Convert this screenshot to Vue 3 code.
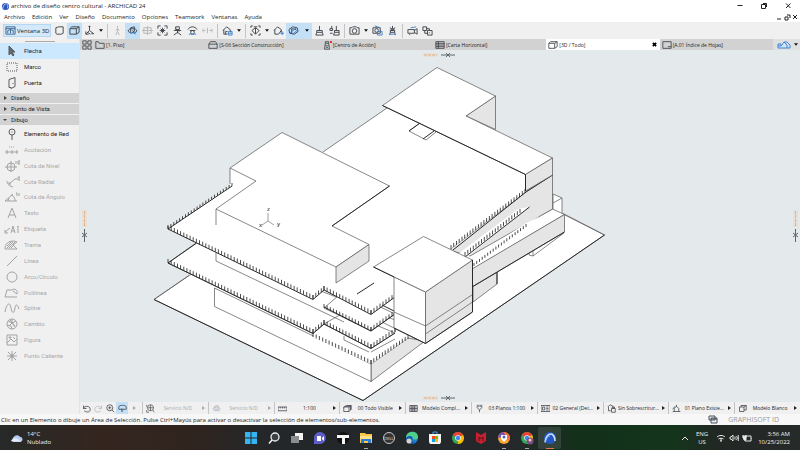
<script setup>
import { h } from 'vue'

const menus = ['Archivo', 'Edición', 'Ver', 'Diseño', 'Documento', 'Opciones', 'Teamwork', 'Ventanas', 'Ayuda']

// Line icons on a 12 x 12 grid: main strokes first, accent strokes second.
const glyphs = {
  window: ['M1 2h10v8H1zM1 4h10M3 9V6l3-1 3 1v3M6 5v4', ''],
  plane: ['M2 3l3-1h5v7l-2 1H3L2 9z', ''],
  box: ['M1 4h7v6H1zM1 4l2-2h8v6l-3 2M8 4l3-2', ''],
  axes: ['M6 1v5l-4 4M6 6l4 3M2 7v3h3M5 2l1-1 1 1M8 9.500h3M4 8l3 2', ''],
  walk: ['M6 1v2M6 4L4 6M6 4l2 2M6 4v3l-2 4M6 7l2 4', ''],
  orbit: ['M3 8C0 7 1 4 6 4s6 3 3 4M4 3l4-1v5l-3 2M4 3v6M6 6l3 4', 'M2 8c2 1 5 1 8 0'],
  target: ['M2 3h8v6H2zM6 1v10M0 6h12', ''],
  fit: ['M1 4V1h3M8 1h3v3M11 8v3H8M4 11H1V8M4 4l4 4M8 4L4 8M3 6h6M6 3v6', ''],
  person: ['M4 2h4v3H4zM2 6h8M6 5v4M6 8l-4 3M6 8l4 3M4 4l4 3', ''],
  look: ['M1 5c2-4 8-4 10 0M3 6h6M4 8a2 2 0 1 0 4 0a2 2 0 1 0-4 0', 'M2 10h8'],
  spread: ['M1 6h3M8 6h3M2 4L0 6l2 2M10 4l2 2-2 2M6 3v6', ''],
  house: ['M1 6l4-4 4 3v3M2 5v5h4M4 10V7h2', 'M7 7h4v4H7zM7 9h4'],
  marquee: ['M1 3V1h2M9 1h2v2M11 9v2H9M3 11H1V9M2 6l4-3 4 3-4 4zM6 3v7M4 2h4', ''],
  cut: ['M1 6l4-4 4 3v3M2 5v5h4l3-4', 'M8 9h4M10 7v4'],
  section: ['M1 5l4-3 5 1 1 4-4 3-5-1zM4 4v5M4 4l5 1', 'M2 9L9 3M5 10l6-5'],
  brush: ['M6 1v5M3 6h6v2H3zM2 11l1-3M10 11H2M10 11L9 8', ''],
  brushes: ['M8 1v5M6 6h5v2H6zM5 11l1-3M11 11H5M11 11V8M3 1v3M1 4h3v2H1zM1 9h3', ''],
  camera: ['M1 3h2l1-1h4l1 1h2v7H1zM3.500 6.500a2.500 2.500 0 1 0 5 0a2.500 2.500 0 1 0-5 0', ''],
  render: ['M1 3h8v6H1zM3 6a2 2 0 1 0 4 0a2 2 0 1 0-4 0', 'M6 7h5v4H6zM3 1l6 2'],
  sun: ['M3 11l1-5h4l1 5M4 8h4M3 3l6 3M9 3L3 6M6 1v3', 'M3 10h6'],
  video: ['M1 5h7v4H1zM8 6l3-2v6L8 8M3 10v1', 'M4 3l6-1'],
  chain: ['M1 2h4v4H1zM6 6h5v5H6zM5 4h3v2M3 6v3h3M8 8v1', ''],
  grid: ['M1 1h4v4H1zM7 1h4v4H7zM1 7h4v4H1zM7 7h4v4H7z', ''],
  folder: ['M1 10V2h3l1 2h6v6z', ''],
  elevation: ['M1 10V5l2-3h6l2 3v5zM1 5h10', ''],
  tower: ['M3 11L4 4h4l1 7zM4 4V2h4v2M4 7h4M5 9h2', ''],
  card: ['M1 2h10v8H1zM1 4h10M1 6h10M1 8h10M4 2v8', ''],
  sheet: ['M1 2h10v8H1zM7 8h4', ''],
  undo: ['M2 2v4h4M2 6c1-4 9-4 9 1S5 11 3 9', ''],
  redo: ['M10 2v4H6M10 6C9 2 1 2 1 7s6 4 8 2', ''],
  zoomin: ['M1 5a4 4 0 1 0 8 0a4 4 0 1 0-8 0M8 8l3 3M3 5h4M5 3v4', ''],
  zoomfit: ['M2 5a4 4 0 1 0 8 0a4 4 0 1 0-8 0M9 8l2 3M6 1v8M2 5h8M1 1v3M1 8v3h3', ''],
  turn: ['M1 4c0-3 10-3 10 0v3H1zM5 6v4M5 10l2-1', ''],
  ruler: ['M0 4h12v5H0zM3 4v2M6 4v2M9 4v2', ''],
  layers: ['M1 4l4-2h6v5l-3 3H1zM1 4h7v6M3 3h7v5M8 4l3-2', ''],
  model: ['M1 2h10v8H1zM1 6h10M4 2v8M7 2v8M2 4h8M2 8h8', ''],
  pen: ['M3 1v4l3 3 3-3V1M6 8v3M5 1v3M7 1v3', ''],
  table: ['M0 2h12v8H0zM2 4h3v4H2zM7 4h3M7 6h3M7 8h3', ''],
  lock: ['M1 4l3-3 4 2v3M2 4v5h3M6 6h5v5H6zM7 6V4h3v2', ''],
  plan: ['M1 10h10M3 10V6l3-3 3 3v4M6 3V1M1 7l3-4', ''],
  cube: ['M2 4h6v6H2zM4 4V2h7v6H8M8 4l3-2', '']
}

const Glyph = (props) =>
  h('svg', { viewBox: '0 0 12 12', fill: 'none', 'stroke-width': 1, 'aria-hidden': 'true' }, [
    h('path', { d: glyphs[props.name][0], stroke: 'currentColor' }),
    h('path', { d: glyphs[props.name][1], stroke: '#3f7fd0' })
  ])
Glyph.props = ['name']

const toolbar = [
  { icon: 'plane', label: 'Planta' },
  { icon: 'box', label: 'Perspectiva 3D', on: true },
  { icon: 'axes', label: 'Ejes' },
  { caret: true },
  { sep: true },
  { icon: 'walk', label: 'Explorar', off: true },
  { icon: 'orbit', label: 'Órbita', on: true },
  { icon: 'target', label: 'Mirar a', off: true },
  { icon: 'fit', label: 'Ajustar' },
  { icon: 'person', label: 'Observador' },
  { icon: 'look', label: 'Vista' },
  { icon: 'spread', label: 'Ampliar', off: true },
  { sep: true },
  { icon: 'house', label: 'Filtro 3D' },
  { caret: true },
  { sep: true },
  { icon: 'marquee', label: 'Área de selección' },
  { caret: true },
  { icon: 'cut', label: 'Plano de corte' },
  { icon: 'section', label: 'Sección 3D', on: true },
  { caret: true, on: true },
  { icon: 'brush', label: 'Pincel' },
  { icon: 'brushes', label: 'Pinceles' },
  { sep: true },
  { icon: 'camera', label: 'Foto' },
  { caret: true },
  { icon: 'render', label: 'Render' },
  { icon: 'sun', label: 'Sol' },
  { sep: true },
  { icon: 'video', label: 'Recorrido' },
  { icon: 'chain', label: 'Enlace' }
]

const tabs = [
  { icon: 'folder', name: '[1. Piso]' },
  { icon: 'elevation', name: '[S-06 Sección Construcción]' },
  { icon: 'tower', name: '[Centro de Acción]', alert: true },
  { icon: 'card', name: '[Carta Horizontal]' },
  { icon: 'box', name: '[3D / Todo]', active: true },
  { icon: 'sheet', name: '[A.01 Índice de Hojas]' }
]

// Toolbox icons on a 16 x 12 grid.
const basicTools = [
  { name: 'Flecha', d: 'M5 1v9l2-2 2 3 1-1-2-3h3z', fill: true, on: true },
  { name: 'Marco', d: 'M3 2h10v8H3z', dash: true },
  { name: 'Puerta', d: 'M5 10.500V2.500l6-2v9l-4 2v-1zM9 6v1' }
]
const drawTools = [
  { name: 'Elemento de Red', d: 'M5 4a3 3 0 1 0 6 0a3 3 0 1 0-6 0M7.500 4h1M8 7v5', live: true },
  { name: 'Acotación', d: 'M1 8h13M3 6v4M8 6v4M13 6v4M5 3h1M7 3h1M9 3h1' },
  { name: 'Cota de Nivel', d: 'M3 7a4 4 0 1 0 8 0a4 4 0 1 0-8 0M7 1v12M1 7h12M12 1v3M14 1h2v3h-2z' },
  { name: 'Cota Radial', d: 'M3 5c0 4 3 5 6 6M5 8l6-5M5 8V6M5 8h2M12 2v2M14 1h2v3h-2z' },
  { name: 'Cota de Ángulo', d: 'M1 10h12M1 10l8-7M7 4c3 1 4 3 4 6M4 10l1-3M12 2h1v3M15 2v3' },
  { name: 'Texto', d: 'M4 11L8 1l4 10M5 8h6' },
  { name: 'Etiqueta', d: 'M1 9l5-4M1 7v3h3M7 10l2-7 2 7M8 8h2M13 4l1-1v7' },
  { name: 'Trama', d: 'M1 10c0-5 3-8 9-8l3 1-4 3 4 4zM3 9l6-6M5 9l6-6M3 7l5-5M7 9l2-2' },
  { name: 'Línea', d: 'M3 11L13 1' },
  { name: 'Arco/Círculo', d: 'M3 6a5 5 0 1 0 10 0a5 5 0 1 0-10 0' },
  { name: 'Polilínea', d: 'M13 10H1L3 3h5c3-2 6 0 5 4L9 4' },
  { name: 'Spline', d: 'M1 10C3 0 6 0 7 6s3 6 4 0 3-2 4 1' },
  { name: 'Cambio', d: 'M3 6a5 5 0 1 0 10 0a5 5 0 1 0-10 0M4 3l4 2 4-2M5 8l3-3 3 4M8 1v4M3 7l4 1 1 3M6 2l5 6' },
  { name: 'Figura', d: 'M3 1h10v10H3zM3 9l4-4 3 3 3-3M5 3h2v1H5zM9 3l2 2' },
  { name: 'Punto Caliente', d: 'M8 1v10M3 6h10M4 2l8 8M12 2l-8 8M7 5h2v2H7z' }
]

const quick = [
  { icon: 'zoomfit', text: 'Servicio N/D', off: true },
  { icon: 'orbit', text: 'Servicio N/D', off: true, dim: true },
  { icon: 'ruler', text: '1:100' },
  { icon: 'layers', text: '00 Todo Visible' },
  { icon: 'model', text: 'Modelo Compl...' },
  { icon: 'pen', text: '03 Planos 1:100' },
  { icon: 'table', text: '02 General (Det...' },
  { icon: 'lock', text: 'Sin Sobrescritur...' },
  { icon: 'plan', text: '01 Plano Existe...' },
  { icon: 'cube', text: 'Modelo Blanco' }
]

// Evenly spaced railing posts between two points.
function posts(x1, y1, x2, y2, height = 4) {
  const count = Math.round(Math.hypot(x2 - x1, y2 - y1) / 3.5)
  let d = ''
  for (let i = 0; i <= count; i++) {
    const x = x1 + ((x2 - x1) * i) / count
    const y = y1 + ((y2 - y1) * i) / count
    d += `M${x.toFixed(1)} ${y.toFixed(1)}v-${height}`
  }
  return d
}

const railings = [
  posts(168, 229, 232, 186, 3),
  posts(168, 229, 313, 299),
  posts(313, 299, 324, 290),
  posts(324, 290, 371, 314),
  posts(371, 314, 395, 297),
  posts(168, 263, 313, 333),
  posts(313, 333, 324, 324),
  posts(324, 324, 371, 348),
  posts(371, 348, 395, 332),
  posts(324, 308, 371, 331),
  posts(371, 331, 395, 314),
  posts(313, 337, 371, 364),
  posts(371, 364, 408, 339),
  posts(451, 249, 525, 193),
  posts(465, 256, 520, 213),
  posts(474, 266, 526, 227, 3)
].join('')
</script>

<template>
  <div class="desktop">
    <header class="titlebar">
      <svg class="logo" viewBox="0 0 10 10" aria-hidden="true">
        <circle cx="5" cy="5" r="4" fill="#2b55b8" />
        <path d="M2 8c0-4 2-6 4-6M6 2c2 1 2 3 1 5" fill="none" stroke="#b9d4ff" />
      </svg>
      <h1>archivo de diseño centro cultural - ARCHICAD 24</h1>
      <div class="controls">
        <button aria-label="Minimizar"><svg viewBox="0 0 8 8"><path d="M1.500 3.500h5" /></svg></button>
        <button aria-label="Restaurar"><svg viewBox="0 0 8 8"><path d="M1.500 2.500h4v4h-4zM3 1.500h3.500V5" /></svg></button>
        <button aria-label="Cerrar"><svg viewBox="0 0 8 8"><path d="M2 1.500l4.500 4.500M6.500 1.500L2 6" /></svg></button>
      </div>
    </header>

    <nav class="menubar">
      <button v-for="m in menus" :key="m">{{ m }}</button>
      <div class="doc-controls">
        <button aria-label="Minimizar documento"><svg viewBox="0 0 8 8"><path d="M2 6h4" /></svg></button>
        <button aria-label="Restaurar documento"><svg viewBox="0 0 8 8"><path d="M2 4h3v3H2zM4 2h3v3" /></svg></button>
        <button aria-label="Cerrar documento"><svg viewBox="0 0 8 8"><path d="M2 2l4 4M6 2L2 6" /></svg></button>
      </div>
    </nav>

    <div class="toolbar">
      <button class="mode"><Glyph name="window" class="glyph blue" />Ventana 3D</button>
      <template v-for="(t, i) in toolbar" :key="i">
        <span v-if="t.sep" class="sep"></span>
        <button v-else-if="t.caret" class="caret" :class="{ on: t.on }" aria-label="Más opciones">
          <svg viewBox="0 0 6 4"><path d="M0 0h6L3 4z" /></svg>
        </button>
        <button v-else class="tool" :class="{ on: t.on, off: t.off }" :aria-label="t.label">
          <Glyph :name="t.icon" class="glyph" />
        </button>
      </template>
    </div>

    <div class="workspace">
      <aside class="toolbox">
        <div class="grip"></div>
        <div class="basic">
          <button v-for="t in basicTools" :key="t.name" class="row" :class="{ on: t.on }">
            <svg viewBox="0 0 16 12" aria-hidden="true">
              <path :d="t.d" :fill="t.fill ? '#5b6b78' : 'none'" :stroke-dasharray="t.dash ? '1 1' : null" />
            </svg>{{ t.name }}
          </button>
        </div>
        <button class="group"><svg viewBox="0 0 6 6"><path d="M2 1l3 2-3 2z" /></svg>Diseño</button>
        <button class="group"><svg viewBox="0 0 6 6"><path d="M2 1l3 2-3 2z" /></svg>Punto de Vista</button>
        <button class="group"><svg viewBox="0 0 6 6"><path d="M1 2h4L3 4z" /></svg>Dibujo</button>
        <div class="list">
          <button v-for="t in drawTools" :key="t.name" class="row" :class="{ off: !t.live }">
            <svg viewBox="0 0 16 12" aria-hidden="true"><path :d="t.d" fill="none" /></svg>{{ t.name }}
          </button>
        </div>
      </aside>

      <main class="stage">
        <div class="tabs">
          <button class="overview" aria-label="Vista general"><Glyph name="grid" class="glyph" /></button>
          <div v-for="t in tabs" :key="t.name" class="tab" :class="{ active: t.active }">
            <button class="tab-name">
              <Glyph :name="t.icon" class="glyph" /><span v-if="t.alert" class="alert"></span>{{ t.name }}
            </button>
            <button v-if="t.active" class="tab-close" aria-label="Cerrar pestaña">
              <svg viewBox="0 0 6 6"><path d="M1 1l4 4M5 1L1 5" /></svg>
            </button>
          </div>
          <button class="navigator" aria-label="Navegador">
            <svg class="skyline" viewBox="0 0 14 9"><path d="M1 8V4h3v2l3-4 3 3v3zM7 2h3l3 3v3h-3M1 6h3" /></svg>
            <svg class="down" viewBox="0 0 6 4"><path d="M0 0h6L3 4z" /></svg>
          </button>
        </div>

        <svg class="model" viewBox="80 50 720 352" role="img" aria-label="Modelo 3D">
          <g class="solid">
            <path class="white" d="M154 299.500L189 275.500L330 200L564 214L604.500 235L363 400.500z" stroke="none" />
            <path d="M189 275.500L154 299.500M564 214.500L604.500 235" />
            <path class="bold" d="M154 299.500L363 400.500L604.500 235" />

            <path class="white" d="M553 194l9 4v17l-9-4zM553 203l9-5" />
            <path class="gray" d="M473 286l24-14v12l-24 18z" />
            <path class="bold" d="M497 272v12" />
            <path d="M533 256l31-23M529 251v4l4 1v-6" />
            <path class="white" d="M456 262L552.500 209L564.500 214.500L473 269z" />
            <path class="gray" d="M472 269L564.500 214.500V232L472 287z" />
            <path class="bold" d="M564.500 232L472 287" />
            <path class="gray" d="M527 191L552.500 175V209L470 256L449 250z" />
            <path class="white plain" d="M458 254L518 209L529 207L467 257z" />
            <path class="white plain" d="M472 259L526 223L540 216L474 267z" />

            <path class="gray" d="M371 364L408 338L425 341L371 381.500z" />
            <path class="white" d="M214.500 288L371 364V381.500L214.500 306.500z" />
            <path class="white" d="M168 263L196 243L216 250L395 320V333L371 348.500L324 324L313 333.500z" />
            <path class="white plain" d="M313 337L324 324L371 348L395 332L408 338L371 364z" />
            <path class="white" d="M324 324L345 312L395 333L371 348.500z" />
            <path d="M344 336v4l25 12M371 352l24-13" />
            <path class="white" d="M324 308L345 290L395 314L371 331z" />
            <path d="M216 253v8L344 322" />
            <path class="bold" d="M168 263L196 243.500M168 263L313 333.500L324 324L371 348.500L395 333M324 307L371 331L395 314" />

            <path class="white plain" d="M168 229L230 186V168L323 152L387 108L527 175V191L449 250L395 297L371 314.500L324 290L313 299.500z" />
            <path class="bold" d="M232 186L168 229L313 299.500L324 290L371 314.500L395 297" />
            <path d="M323 152L387 108" />
            <path class="bold" d="M453 250L526 192L552.500 175M465 257L529.500 207" />
            <path d="M382 322l12 6" />
            <path class="bold" d="M357 294l17-11M382 305l12 6" />

            <path class="white" d="M282 132.500L389.500 186L332 226L369 244.500L336 267L216 209L256 181L230 168z" />
            <path class="bold" d="M389.500 186L332 226" />
            <path d="M230 168v16M216 209v16" />
            <path class="gray" d="M336 267L369 244.500V261L336 283z" />

            <path class="gray" d="M495.500 96V129.500L466 116z" />
            <path class="white" d="M437 67.500L495.500 96L466 116L552.500 158L525.500 174.500L382.500 105.500z" />
            <path class="gray" d="M525.500 174.500L552.500 158V175L525.500 191z" />
            <path class="bold" d="M382.500 105.500L525.500 174.500V191" />
            <path d="M420 123L409 131L426 140L436 132" />
            <path class="bold" d="M420 123L409 131M423 139L434 131" />

            <path class="posts" :d="railings" />

            <path class="white" d="M394 277V328L425.500 343.500V292z" />
            <path class="gray" d="M425.500 292L472.500 260V312L425.500 343.500z" />
            <path class="white" d="M423.500 236.500L472.500 260L425.500 292L373.500 267z" />
            <path d="M394 312L425.500 326L472.500 294.500M425.500 334L472.500 302" />
            <path class="bold" d="M373.500 267L394 277M394 328L425.500 343.500L472.500 312V260" />
          </g>

          <g class="axis">
            <path d="M268 213v8l-6 4M268 221l6 4" />
            <text x="267" y="211">z</text>
            <text x="259" y="227">x</text>
            <text x="277" y="226">y</text>
          </g>

          <g class="markers">
            <rect x="423" y="53" width="15" height="4" />
            <rect x="423" y="396" width="15" height="4" />
            <rect x="82" y="210" width="5" height="17" />
            <rect x="793" y="210" width="5" height="17" />
            <path class="dash" d="M424 55h13M424 398h13M84.500 211v15M795.500 211v15" />
            <path class="knot" d="M441 55h14M446 53l4 4M450 53l-4 4M441 398h14M446 396l4 4M450 396l-4 4M84.500 229v13M82 233l5 4M87 233l-5 4M795.500 229v13M793 233l5 4M798 233l-5 4" />
          </g>
        </svg>

        <div class="quickbar">
          <div class="views">
            <button aria-label="Deshacer vista"><Glyph name="undo" class="glyph" /></button>
            <button class="off" aria-label="Rehacer vista"><Glyph name="redo" class="glyph" /></button>
            <button aria-label="Acercar"><Glyph name="zoomin" class="glyph" /></button>
            <button class="on" aria-label="Girar"><Glyph name="turn" class="glyph" /></button>
            <button class="off" aria-label="Siguiente"><svg class="arrow" viewBox="0 0 4 6"><path d="M1 1l3 2-3 2z" /></svg></button>
          </div>
          <button v-for="(q, i) in quick" :key="i" class="option" :class="{ off: q.off }">
            <Glyph :name="q.icon" class="glyph" :class="{ faint: q.dim }" />
            <span>{{ q.text }}</span>
            <svg class="arrow" viewBox="0 0 4 6"><path d="M1 1l3 2-3 2z" /></svg>
          </button>
        </div>
      </main>
    </div>

    <footer class="status">
      <p>Clic en un Elemento o dibuje un Área de Selección. Pulse Ctrl+Mayús para activar o desactivar la selección de elementos/sub-elementos.</p>
      <svg class="windows" viewBox="0 0 10 9" aria-hidden="true"><path d="M1 1h6v4H1zM3 3h6v5H3zM3 4h6" /></svg>
      <span class="brand">GRAPHISOFT ID</span>
    </footer>

    <div class="taskbar">
      <button class="weather">
        <svg viewBox="0 0 14 10" aria-hidden="true">
          <path d="M4 9a3 3 0 0 1 0-5a4 4 0 0 1 7 0a2.500 2.500 0 0 1 0 5z" fill="#b8cdf2" />
          <path d="M1 8c2-3 5-4 9-1l2 2H3z" fill="#e3ebfa" />
        </svg>
        <span>14°C<br />Nublado</span>
      </button>

      <div class="apps">
        <button aria-label="Inicio">
          <svg viewBox="0 0 14 14"><path d="M1 1h5.500v5.500H1zM7.500 1H13v5.500H7.500zM1 7.500h5.500V13H1zM7.500 7.500H13V13H7.500z" fill="#35b5f1" /></svg>
        </button>
        <button aria-label="Buscar">
          <svg viewBox="0 0 14 14"><circle cx="8" cy="6" r="4" fill="#3a3f42" stroke="#eee" stroke-width="1.300" /><path d="M5 9l-3 3.500" stroke="#eee" stroke-width="1.600" /></svg>
        </button>
        <button aria-label="Vista de tareas">
          <svg viewBox="0 0 14 14"><path d="M5 2h8v7H5z" fill="#f4f4f4" /><path d="M1 5h8v7H1z" fill="#8c8c8c" /></svg>
        </button>
        <button aria-label="Chat">
          <svg viewBox="0 0 14 14"><path d="M1 13V6a6 6 0 1 1 6 7z" fill="#5b5fc7" /><path d="M4 5h4v5H4zM9 7l2-2v5L9 8z" fill="#fff" /></svg>
        </button>
        <button aria-label="Cuaderno">
          <svg viewBox="0 0 14 14"><circle cx="7" cy="7" r="6" fill="#111" /><path d="M1 4h12v3H9v6H6V7H1z" fill="#f5f5f5" /></svg>
        </button>
        <button class="open" aria-label="Explorador">
          <svg viewBox="0 0 14 14"><path d="M1 2h5l1 1h6v9H1z" fill="#f7c948" /><path d="M1 5h12v4H1z" fill="#ffe08a" /><path d="M2 8h10v4H9v-2H5v2H2z" fill="#2d7dd2" /></svg>
        </button>
        <button aria-label="Dell">
          <svg viewBox="0 0 14 14"><circle cx="7" cy="7" r="5.500" fill="#333" stroke="#c9c9c9" /><text x="7" y="9" text-anchor="middle" font-size="4" fill="#e6e6e6">DELL</text></svg>
        </button>
        <button aria-label="Edge">
          <svg viewBox="0 0 14 14"><circle cx="7" cy="7" r="6" fill="#1f7fd0" /><path d="M1 7c0-8 12-8 12-1 0 3-4 3-5 2 1-3-4-4-7-1z" fill="#4fd08a" /><path d="M1 7c3-3 6-2 6 0-1 3 2 5 4 4-5 4-10 1-10-4z" fill="#145ea8" /><circle cx="4" cy="10" r="2.500" fill="#d7d2cb" /></svg>
        </button>
        <button aria-label="Tienda">
          <svg viewBox="0 0 14 14"><path d="M5 4V1h4v3" fill="none" stroke="#3aa0e8" /><path d="M1 3h12v8l-1 2H2l-1-2z" fill="#f2f2f2" /><path d="M4 5h3v3H4z" fill="#f25022" /><path d="M7 5h3v3H7z" fill="#7fba00" /><path d="M4 8h3v3H4z" fill="#00a4ef" /><path d="M7 8h3v3H7z" fill="#ffb900" /></svg>
        </button>
        <button aria-label="Chrome">
          <svg viewBox="0 0 14 14"><circle cx="7" cy="7" r="6" fill="#34a853" /><path d="M7 7L1.800 4a6 6 0 0 1 10.400 0z" fill="#ea4335" /><path d="M7 7l5.200-3A6 6 0 0 1 7 13z" fill="#fbbc05" /><circle cx="7" cy="7" r="2.800" fill="#fff" /><circle cx="7" cy="7" r="2.200" fill="#4285f4" /></svg>
        </button>
        <button aria-label="McAfee">
          <svg viewBox="0 0 14 14"><path d="M2 1l5 3 5-3v9l-5 3-5-3z" fill="#c8202f" /><path d="M5 10V6l2 1.500L9 6v4" fill="none" stroke="#4a1418" /></svg>
        </button>
        <button class="open" aria-label="Navegador seguro">
          <svg viewBox="0 0 14 14"><circle cx="7" cy="7" r="6" fill="#f3a52d" /><path d="M1 7a6 6 0 0 1 6-6l2 4z" fill="#7a4fc0" /><path d="M7 1a6 6 0 0 1 5 9L9 7z" fill="#f26b3a" /><path d="M4 4h6v4l-3 3-3-3z" fill="#fff" /><circle cx="7" cy="6" r="1.500" fill="#4b62c8" /></svg>
        </button>
        <button class="open" aria-label="Chrome, perfil">
          <svg viewBox="0 0 14 14"><circle cx="7" cy="7" r="6" fill="#34a853" /><path d="M7 7L1.800 4a6 6 0 0 1 10.400 0z" fill="#ea4335" /><path d="M7 7l5.200-3A6 6 0 0 1 7 13z" fill="#fbbc05" /><circle cx="7" cy="7" r="2.800" fill="#fff" /><circle cx="7" cy="7" r="2.200" fill="#4285f4" /><circle cx="10" cy="10" r="3.500" fill="#7b4f86" /><circle cx="10" cy="9" r="1.500" fill="#f0c9a8" /></svg>
        </button>
        <button class="current" aria-label="Archicad">
          <svg viewBox="0 0 14 14"><circle cx="7" cy="7" r="6" fill="#2459c4" /><path d="M2 11C3 5 6 3 8 3c2 0 4 3 4 7" fill="none" stroke="#cfe4ff" stroke-width="1.600" /><path d="M2 12c1-4 3-7 5-7" fill="none" stroke="#7fb2f5" /></svg>
        </button>
      </div>

      <div class="tray">
        <button aria-label="Iconos ocultos"><svg viewBox="0 0 10 10"><path d="M2 7l3-3 3 3" /></svg></button>
        <button class="lang">ENG<br />US</button>
        <div class="signals">
          <svg viewBox="0 0 10 10" aria-hidden="true"><path d="M1 4c2-2 6-2 8 0M2.500 6c2-1 3-1 5 0M4 8h2M5 5v3" /></svg>
          <svg viewBox="0 0 10 10" aria-hidden="true"><path d="M1 4h1l2-2v6L2 6H1zM6 3.500v3M7.500 3c1 1 1 3 0 4M9 2c1 2 1 4 0 6" /></svg>
          <svg viewBox="0 0 10 10" aria-hidden="true"><path d="M3 3h6v5H3zM10 5v1M1 2v3h3V2" /><path d="M1 3h3v4H2z" fill="#e8e8e8" /></svg>
        </div>
        <button class="clock">3:56 AM<br />10/25/2022</button>
      </div>
    </div>
  </div>
</template>

<style>
body {
  margin: 0;
}
</style>

<style scoped>
.desktop {
  display: flex;
  flex-direction: column;
  min-height: 100vh;
  background: #f0f0f0;
  color: #1c1c1c;
  font-family: "Open Sans", "Noto Sans", sans-serif;
  font-size: 6px;
  line-height: 8px;
}
button {
  display: flex;
  align-items: center;
  margin: 0;
  padding: 0;
  border: 0;
  background: none;
  color: inherit;
  font: inherit;
  text-align: left;
  white-space: nowrap;
}
svg {
  display: block;
  flex: none;
}
.glyph {
  width: 10px;
  height: 10px;
  color: #3c4248;
}
.toolbar .glyph {
  width: 11px;
  height: 11px;
}
.toolbar .blue {
  color: #35628f;
}
.titlebar {
  display: flex;
  align-items: center;
  height: 12px;
  padding-left: 1px;
  background: #fff;
}
.logo {
  width: 9px;
  height: 9px;
}
.titlebar h1 {
  flex: 1;
  margin: 0 0 0 1px;
  font-size: 6px;
  font-weight: 400;
}
.controls {
  display: flex;
}
.controls button {
  justify-content: center;
  width: 24px;
}
.controls svg,
.doc-controls svg {
  width: 8px;
  height: 8px;
  fill: none;
  stroke: #222;
}
.menubar {
  display: flex;
  align-items: center;
  gap: 7px;
  height: 10px;
  padding: 0 1px 0 4px;
  background: #fff;
}
.doc-controls {
  display: flex;
  margin-left: auto;
}
.toolbar {
  display: flex;
  align-items: center;
  height: 17px;
  padding-left: 3px;
}
.mode {
  gap: 1px;
  width: 48px;
  height: 13px;
  margin-right: 1px;
  padding-left: 1px;
  box-sizing: border-box;
  border: 1px solid #b4d7f2;
  background: #d3e8f8;
}
.tool {
  justify-content: center;
  width: 15px;
  height: 16px;
}
.caret {
  justify-content: center;
  width: 8px;
  height: 16px;
}
.caret svg,
.down {
  width: 4px;
  height: 3px;
  fill: #111;
}
.on {
  background: #c3e0f7;
}
.off {
  color: #a9a9a9;
}
.off .glyph {
  color: #b5b5b5;
}
.caret.on {
  width: 11px;
}
.sep {
  width: 1px;
  height: 14px;
  margin: 0 2px;
  background: #c4c4c4;
}
.workspace {
  display: flex;
  flex: 1;
}
.toolbox {
  width: 80px;
  flex: none;
  box-sizing: border-box;
  border-right: 1px solid #e3e3e3;
  font-family: Roboto, "Open Sans", sans-serif;
}
.grip {
  width: 30px;
  height: 1px;
  margin: 2px auto 1px;
  background: #aaa;
}
.row {
  gap: 4px;
  width: 100%;
  height: 16px;
  padding-left: 4px;
}
.row svg {
  width: 16px;
  height: 12px;
  stroke: #5a5a5a;
}
.row.off {
  color: #a8a8a8;
}
.row.off svg {
  stroke: #a3a3a3;
}
.row.on {
  background: #cce8ff;
}
.group {
  gap: 3px;
  width: 100%;
  height: 10px;
  margin-bottom: 1px;
  padding-left: 2px;
  background: #d2d2d2;
}
.basic {
  padding-bottom: 2px;
}
.group svg {
  width: 6px;
  height: 6px;
  fill: #444;
}
.list {
  display: grid;
  grid-auto-rows: 1fr;
  height: 238px;
}
.list .row {
  height: auto;
}
.stage {
  display: flex;
  flex: 1;
  flex-direction: column;
  min-width: 0;
}
.tabs {
  display: flex;
  height: 11px;
  background: #d2d2d2;
  font-size: 5px;
}
.overview {
  justify-content: center;
  width: 13px;
}
.tab {
  display: flex;
  flex: 1;
  align-items: center;
  min-width: 0;
  padding: 0 3px 0 2px;
}
.tab-name {
  position: relative;
  gap: 1px;
  flex: 1;
}
.alert {
  position: absolute;
  top: 1px;
  left: 8px;
  width: 2px;
  height: 2px;
  background: #e03030;
}
.active {
  background: #fff;
}
.tab-close svg {
  width: 5px;
  height: 5px;
  stroke: #000;
  stroke-width: 2;
}
.navigator {
  gap: 3px;
  width: 27px;
  padding-left: 4px;
  box-sizing: border-box;
  background: #dfe0e1;
}
.skyline {
  width: 14px;
  height: 9px;
  fill: #cfe3fa;
  stroke: #4684d2;
}
.model {
  width: 100%;
  background: #e4e9eb;
}
.solid path {
  fill: none;
  stroke: #555;
  stroke-width: 0.700px;
}
.solid .white {
  fill: #fff;
}
.solid .gray {
  fill: #e5e5e5;
}
.solid .plain {
  stroke: none;
}
.solid .bold {
  stroke: #2a2a2a;
  stroke-width: 1px;
}
.solid .posts {
  stroke: #222;
  stroke-width: 0.800px;
}
.axis path {
  fill: none;
  stroke: #777;
  stroke-width: 0.700px;
}
.axis text {
  font-size: 6px;
}
.markers rect {
  fill: #e8dfd7;
}
.markers path {
  fill: none;
}
.markers .dash {
  stroke: #dbb08c;
  stroke-dasharray: 3 1;
}
.markers .knot {
  stroke: #5a666b;
}
.quickbar {
  display: flex;
  height: 12px;
  font-size: 5px;
}
.views {
  display: flex;
  align-items: center;
  box-sizing: border-box;
  width: 63px;
  border-right: 1px solid #c4c4c4;
}
.views button {
  justify-content: center;
  width: 12px;
  height: 12px;
}
.quickbar .glyph {
  width: 9px;
  height: 9px;
}
.arrow {
  width: 4px;
  height: 6px;
  fill: #222;
}
.off .arrow {
  fill: #aaa;
}
.option {
  flex: 1;
  min-width: 0;
  padding: 0 3px 0 3px;
  border-right: 1px solid #c4c4c4;
}
.option:last-child {
  border-right: 0;
}
.option span {
  flex: 1;
  text-align: center;
}
.option.off .glyph {
  color: #555;
}
.option .glyph.faint {
  opacity: 0.400;
}
.status {
  display: flex;
  align-items: center;
  height: 11px;
  padding: 0 21px 0 1px;
  background: #f7f7f7;
}
.status p {
  flex: 1;
  margin: 0;
}
.windows {
  width: 10px;
  height: 9px;
  margin-right: 10px;
  fill: #eee;
  stroke: #47525c;
}
.brand {
  color: #9a9a9a;
  font-size: 7px;
}
.taskbar {
  display: grid;
  grid-template-columns: 1fr auto 1fr;
  align-items: center;
  height: 25px;
  background: linear-gradient(90deg, #262a28 0%, #35251f 12%, #30241f 24%, #23272a 34%, #25282b 64%, #12301a 73%, #14351b 84%, #222724 90%, #262a29 100%);
  color: #f0f0f0;
}
.weather {
  gap: 4px;
  padding-left: 10px;
}
.weather svg {
  width: 13px;
  height: 10px;
}
.apps {
  display: flex;
}
.apps button {
  justify-content: center;
  width: 23px;
  height: 22px;
}
.apps svg {
  width: 14px;
  height: 14px;
}
.apps .open {
  background: linear-gradient(#aaa, #aaa) center bottom / 4px 1px no-repeat;
}
.apps .current {
  border-radius: 2px;
  background: linear-gradient(#e07a45, #e07a45) center bottom / 8px 1px no-repeat, #ffffff1c;
}
.tray {
  display: flex;
  align-items: center;
  justify-content: flex-end;
  padding-right: 10px;
}
.tray svg {
  width: 10px;
  height: 10px;
  fill: none;
  stroke: #e8e8e8;
}
.lang {
  justify-content: center;
  margin: 0 8px 0 6px;
  text-align: center;
}
.signals {
  display: flex;
  gap: 3px;
  margin-right: 6px;
}
.clock {
  text-align: right;
}
</style>
